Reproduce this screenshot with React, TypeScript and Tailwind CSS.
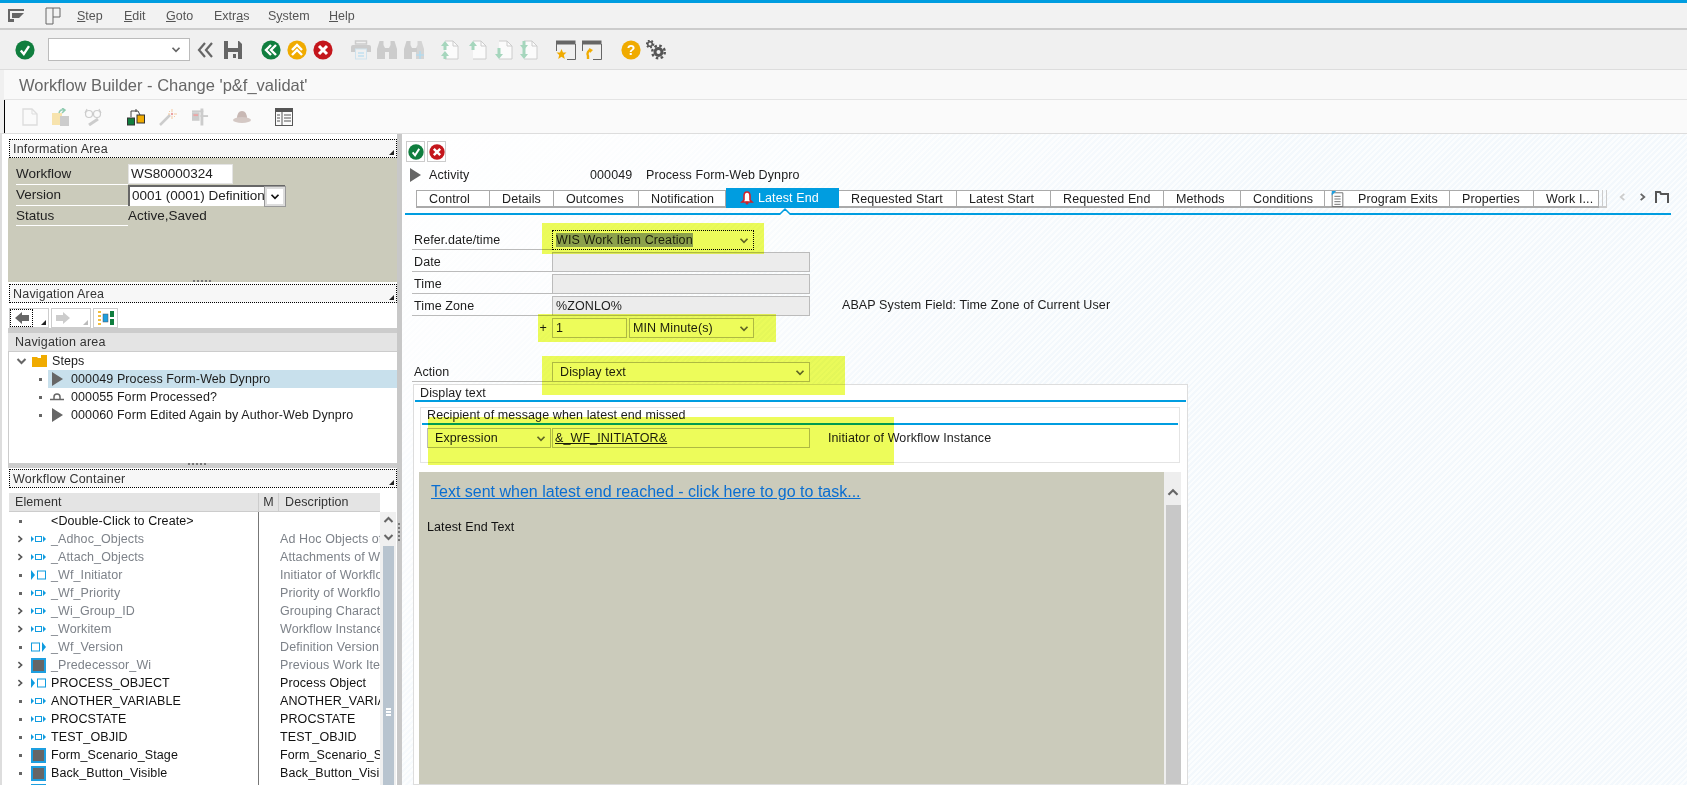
import type { ReactNode } from "react";

const menuItems: { pre: string; key: string; post: string; width: string }[] = [
  { pre: "", key: "S", post: "tep", width: "w-[47px]" },
  { pre: "", key: "E", post: "dit", width: "w-[42px]" },
  { pre: "", key: "G", post: "oto", width: "w-[48px]" },
  { pre: "Extr", key: "a", post: "s", width: "w-[54px]" },
  { pre: "S", key: "y", post: "stem", width: "w-[61px]" },
  { pre: "", key: "H", post: "elp", width: "w-[40px]" },
];

const tabs = [
  { label: "Control", width: "w-[74px]" },
  { label: "Details", width: "w-[64px]" },
  { label: "Outcomes", width: "w-[85px]" },
  { label: "Notification", width: "w-[87px]" },
  { label: "Latest End", width: "w-[113px]", active: true },
  { label: "Requested Start", width: "w-[118px]" },
  { label: "Latest Start", width: "w-[94px]" },
  { label: "Requested End", width: "w-[113px]" },
  { label: "Methods", width: "w-[77px]" },
  { label: "Conditions", width: "w-[84px]" },
  { label: "Program Exits", width: "w-[125px]", doc: true },
  { label: "Properties", width: "w-[84px]" },
  { label: "Work I...", width: "w-[65px]" },
];

type Kind = "none" | "small" | "init" | "version" | "block";

const containerRows: { name: string; desc: string; kind: Kind; open?: boolean; dim?: boolean }[] = [
  { name: "<Double-Click to Create>", desc: "", kind: "none" },
  { name: "_Adhoc_Objects", desc: "Ad Hoc Objects of Workflow", kind: "small", open: true, dim: true },
  { name: "_Attach_Objects", desc: "Attachments of Workflow", kind: "small", open: true, dim: true },
  { name: "_Wf_Initiator", desc: "Initiator of Workflow Instance", kind: "init", dim: true },
  { name: "_Wf_Priority", desc: "Priority of Workflow", kind: "small", dim: true },
  { name: "_Wi_Group_ID", desc: "Grouping Characteristic", kind: "small", open: true, dim: true },
  { name: "_Workitem", desc: "Workflow Instance", kind: "small", open: true, dim: true },
  { name: "_Wf_Version", desc: "Definition Version", kind: "version", dim: true },
  { name: "_Predecessor_Wi", desc: "Previous Work Item", kind: "block", open: true, dim: true },
  { name: "PROCESS_OBJECT", desc: "Process Object", kind: "init", open: true },
  { name: "ANOTHER_VARIABLE", desc: "ANOTHER_VARIABLE", kind: "small" },
  { name: "PROCSTATE", desc: "PROCSTATE", kind: "small" },
  { name: "TEST_OBJID", desc: "TEST_OBJID", kind: "small" },
  { name: "Form_Scenario_Stage", desc: "Form_Scenario_Stage", kind: "block" },
  { name: "Back_Button_Visible", desc: "Back_Button_Visible", kind: "block" },
  { name: "Next_Button_Visible", desc: "Next_Button_Visible", kind: "block" },
];

function Chevron({ dir = "down", className = "w-[10px] h-[7px]", color = "#666" }: { dir?: "down" | "up" | "left" | "right"; className?: string; color?: string }) {
  const d = { down: "M1 2l4 4 4-4", up: "M1 6l4-4 4 4", left: "M7 0.5L3 4l4 3.5", right: "M3 0.5L7 4l-4 3.5" }[dir];
  return (
    <svg viewBox="0 0 10 8" className={className}>
      <path d={d} fill="none" stroke={color} strokeWidth="2" />
    </svg>
  );
}

function Round({ fill, className = "w-[20px] h-[20px]", children }: { fill: string; className?: string; children: ReactNode }) {
  return (
    <svg viewBox="0 0 20 20" className={`shrink-0 ${className}`}>
      <circle cx="10" cy="10" r="9.6" fill={fill} />
      {children}
    </svg>
  );
}

const white = { fill: "none", stroke: "#fff", strokeWidth: 2.4 };

function CheckIcon({ className }: { className?: string }) {
  return (
    <Round fill="#107e3e" className={className}>
      <path d="M5.8 10.5l3 3.6 5.2-8" {...white} />
    </Round>
  );
}

function CancelIcon({ className }: { className?: string }) {
  return (
    <Round fill="#c4161c" className={className}>
      <path d="M6 6l8 8M14 6l-8 8" {...white} strokeWidth={3} />
    </Round>
  );
}

function Floppy() {
  return (
    <svg viewBox="0 0 20 20" className="h-[20px] w-[20px] shrink-0">
      <path d="M1 1h15l3 3v15H1z" fill="#666" />
      <rect x="5" y="1" width="10" height="7" fill="#f0f0f0" />
      <rect x="5" y="12" width="10" height="7" fill="#f0f0f0" />
      <rect x="10" y="14" width="3" height="4" fill="#666" />
    </svg>
  );
}

function Printer() {
  return (
    <svg viewBox="0 0 20 20" className="h-[20px] w-[20px] shrink-0">
      <rect x="4.5" y="1" width="11" height="3" fill="none" stroke="#ccc" strokeWidth="1.5" />
      <path d="M0 7q0-2 2-2h16q2 0 2 2v5H0z" fill="#ccc" />
      <rect x="4.5" y="9" width="11" height="10" fill="#f0f0f0" stroke="#cfe3ee" />
      <path d="M7 13h6M7 16h6" stroke="#a9d8f0" />
    </svg>
  );
}

function Binoculars({ plus = false }: { plus?: boolean }) {
  return (
    <svg viewBox="0 0 20 20" className="h-[20px] w-[20px] shrink-0">
      <path d="M2.500 1h4v4l1.500 3v11H0V9z" fill="#ccc" />
      <path d="M13.500 1h4L20 9v10h-8V8l1.500-3z" fill={plus ? "#d4d4d4" : "#ccc"} />
      <rect x="7" y="8" width="6" height="4" fill="#ccc" />
      {plus && <path d="M16 11v8M12 15h8" stroke="#a9dcf5" strokeWidth="1.200" />}
    </svg>
  );
}

function PageArrows({ up = 0, down = 0 }: { up?: number; down?: number }) {
  const green = "#a6d6bd";
  return (
    <svg viewBox="0 0 18 20" className="h-[20px] w-[18px] shrink-0">
      <path d="M4 1h8l5 5v13H4" fill="#fbfbfb" stroke="#ccc" />
      <path d="M12 1v5h5" fill="none" stroke="#ccc" />
      {up > 0 && <path d="M4 1l4 5H5.500v4h-3V6H0z" fill={green} />}
      {up > 1 && <path d="M4 11l4 5H5.500v3h-3v-3H0z" fill={green} />}
      {down > 0 && up === 0 && <path d="M4 19l4-5H5.500V8h-3v6H0z" fill={green} />}
      {down > 1 && <path d="M4 10l4-5H5.500V1h-3v4H0z" fill={green} />}
    </svg>
  );
}

function WindowIcon({ children }: { children: ReactNode }) {
  return (
    <svg viewBox="0 0 20 20" className="h-[20px] w-[20px] shrink-0">
      <rect x="0" y="0.500" width="19.500" height="4" fill="#666" />
      <path d="M0.500 4v7M19.500 4v15.500H11" fill="none" stroke="#666" />
      {children}
    </svg>
  );
}

function Gears() {
  return (
    <svg viewBox="0 0 20 20" className="h-[20px] w-[20px] shrink-0" fill="none" stroke="#555">
      <circle cx="4" cy="4" r="2.300" strokeWidth="1.600" />
      <circle cx="4" cy="4" r="3.600" strokeWidth="1.500" strokeDasharray="1.800 1.800" />
      <circle cx="12.500" cy="12" r="3.500" strokeWidth="3" />
      <circle cx="12.500" cy="12" r="6.300" strokeWidth="2.400" strokeDasharray="2.500 2.450" />
    </svg>
  );
}

function AppTools() {
  return (
    <div className="ml-[17px] flex items-center">
      <svg viewBox="0 0 16 18" className="h-[18px] w-[16px]">
        <path d="M1 1h9l5 5v11H1z" fill="#fafafa" stroke="#ddd" strokeWidth="1.400" />
        <path d="M10 1v5h5" fill="none" stroke="#ddd" />
      </svg>
      <svg viewBox="0 0 18 18" className="ml-[14px] h-[18px] w-[18px]">
        <rect x="0" y="5" width="10" height="12" fill="#f7e3ad" />
        <rect x="8" y="8" width="9" height="10" fill="#ccc" />
        <path d="M7 5q1-4 5-3M10 0l3 2-3 3" fill="none" stroke="#8fcbb0" strokeWidth="1.500" />
      </svg>
      <svg viewBox="0 0 20 18" className="ml-[14px] h-[18px] w-[20px]" fill="none" stroke="#ccc" strokeWidth="1.200">
        <circle cx="5" cy="6" r="3.500" />
        <circle cx="13" cy="6" r="3.500" />
        <path d="M8.500 6h1M1 5L3 1M17 5l-2-4" />
        <path d="M5 17l9-6" stroke="#ccc" strokeWidth="3" />
      </svg>
      <svg viewBox="0 0 18 18" className="ml-[23px] h-[18px] w-[18px]">
        <path d="M4 9V3h7l2 4" fill="none" stroke="#444" />
        <path d="M9 1v3" stroke="#444" />
        <rect x="0.500" y="10" width="7" height="7" fill="#107e3e" stroke="#333" />
        <rect x="10" y="7" width="7.500" height="8" fill="#f0ab00" stroke="#333" />
      </svg>
      <svg viewBox="0 0 18 18" className="ml-[14px] h-[18px] w-[18px]">
        <path d="M1 17L11 7" stroke="#ccc" strokeWidth="2.500" />
        <path d="M13 1v3M13 8v3M9 6h2M15 6h3M10 3l1 1M16 9l-1-1" stroke="#f3c9a0" />
        <circle cx="13" cy="6" r="1.200" fill="#eba0a0" />
      </svg>
      <svg viewBox="0 0 18 18" className="ml-[15px] h-[18px] w-[17px]">
        <rect x="0" y="2" width="12" height="2" fill="#ccc" />
        <rect x="0" y="4" width="8" height="9" fill="#ccc" />
        <rect x="1.500" y="6" width="5" height="2" fill="#eba5a5" />
        <rect x="9" y="0" width="3" height="18" fill="#ccc" />
        <rect x="9" y="7" width="8" height="2" fill="#ccc" />
      </svg>
      <svg viewBox="0 0 18 14" className="ml-[24px] h-[14px] w-[18px]">
        <path d="M4 9Q4 1 9 1t5 8z" fill="#c8b8b4" />
        <ellipse cx="9" cy="10" rx="9" ry="3" fill="#d4c8c4" />
      </svg>
      <svg viewBox="0 0 18 18" className="ml-[24px] h-[18px] w-[18px]">
        <rect x="0.500" y="0.500" width="17" height="17" fill="#fafafa" stroke="#555" />
        <rect x="0" y="0" width="18" height="4" fill="#555" />
        <path d="M7 4v14" stroke="#555" />
        <path d="M2 7h3M2 10h3M2 13h3M9 7h7M9 10h7M9 13h7" stroke="#555" />
      </svg>
    </div>
  );
}

function PanelHeader({ label }: { label: string }) {
  return (
    <div className="relative ml-[1px] flex h-[19px] shrink-0 items-center border border-dotted border-black bg-[#f7f7f7] pt-[1px] pl-[3px] text-[12.5px] tracking-[0.2px] text-[#333]">
      {label}
      <svg viewBox="0 0 5 5" className="absolute right-[2px] bottom-[2px] h-[5px] w-[5px]">
        <path d="M5 0v5H0z" fill="#222" />
      </svg>
    </div>
  );
}

function SashDots({ className = "" }: { className?: string }) {
  return (
    <div className={`flex gap-[2px] ${className}`}>
      {[0, 1, 2, 3, 4].map((i) => (
        <span key={i} className="h-[2px] w-[2px] bg-[#777]" />
      ))}
    </div>
  );
}

function StepTriangle() {
  return (
    <svg viewBox="0 0 11 14" className="h-[14px] w-[11px] shrink-0">
      <path d="M0 0l11 7-11 7z" fill="#666" />
    </svg>
  );
}

function KindIcon({ kind }: { kind: Kind }) {
  if (kind === "none") return <span className="h-[14px] w-[15px] shrink-0" />;
  if (kind === "block") {
    return (
      <svg viewBox="0 0 15 15" className="h-[15px] w-[15px] shrink-0">
        <rect x="0" y="0" width="15" height="15" fill="#1d9fe0" />
        <rect x="2" y="2" width="11" height="11" fill="#666" />
      </svg>
    );
  }
  return (
    <svg viewBox="0 0 15 12" className="h-[12px] w-[15px] shrink-0" fill="#0f9ce0">
      {kind === "small" && (
        <>
          <path d="M0 3l3 3-3 3z" />
          <rect x="4.500" y="3.500" width="6" height="5" fill="none" stroke="#0f9ce0" />
          <path d="M12 3l3 3-3 3z" />
        </>
      )}
      {kind === "init" && (
        <>
          <path d="M0 1l4 5-4 5z" />
          <rect x="6.500" y="2" width="8" height="8" fill="none" stroke="#0f9ce0" />
        </>
      )}
      {kind === "version" && (
        <>
          <rect x="0.500" y="2" width="8" height="8" fill="none" stroke="#0f9ce0" />
          <path d="M11 1l4 5-4 5z" />
        </>
      )}
    </svg>
  );
}

function Bullet() {
  return <span className="block h-[3px] w-[3px] bg-[#666]" />;
}

function LeftColumn() {
  return (
    <aside className="flex h-full w-[397px] shrink-0 flex-col overflow-hidden border-l-2 border-[#ddd] bg-white pt-[5px] pl-[6px]">
      <PanelHeader label="Information Area" />
      <div className="flex h-[124px] shrink-0 flex-col bg-[#cbcbbb] pt-[6px] pl-[8px] text-[13.5px] text-[#222]">
        <div className="flex h-[21px]">
          <span className="flex h-[21px] w-[112px] items-center border-b border-white pt-[1px]">Workflow</span>
          <span className="flex h-[20px] w-[105px] items-center border border-[#e4e4e4] bg-white pt-[1px] pl-[2px]">WS80000324</span>
        </div>
        <div className="flex h-[21px]">
          <span className="flex h-[21px] w-[112px] items-center border-b border-white">Version</span>
          <div className="flex h-[21px] w-[157px] items-center justify-between border-t-2 border-l-2 border-[#666] bg-white pl-[2px]">
            0001 (0001) Definition
            <span className="flex h-[19px] w-[20px] items-center justify-center border-2 border-[#ddd] bg-white outline outline-[#999]">
              <Chevron color="#111" />
            </span>
          </div>
        </div>
        <div className="flex h-[20px]">
          <span className="flex h-[20px] w-[112px] items-center border-b border-white pt-[1px]">Status</span>
          <span className="flex items-center pt-[1px]">Active,Saved</span>
        </div>
        <SashDots className="mt-auto ml-[177px]" />
      </div>
      <div className="h-[2px] shrink-0" />
      <PanelHeader label="Navigation Area" />
      <div className="flex h-[25px] shrink-0 items-end gap-[2px] bg-white pl-[1px]">
        <div className="relative flex h-[20px] w-[40px] items-center border border-[#ccc]">
          <span className="flex h-[18px] w-[23px] items-center justify-center border border-dotted border-black">
            <svg viewBox="0 0 14 12" className="h-[12px] w-[14px]">
              <path d="M0 6l7-6v3h7v6H7v3z" fill="#666" />
            </svg>
          </span>
          <svg viewBox="0 0 5 5" className="absolute right-[2px] bottom-[2px] h-[5px] w-[5px]">
            <path d="M5 0v5H0z" fill="#222" />
          </svg>
        </div>
        <div className="relative flex h-[20px] w-[40px] items-center border border-[#ccc] pl-[4px]">
          <svg viewBox="0 0 14 12" className="h-[12px] w-[14px]">
            <path d="M14 6L7 0v3H0v6h7v3z" fill="#ccc" />
          </svg>
          <svg viewBox="0 0 5 5" className="absolute right-[2px] bottom-[2px] h-[5px] w-[5px]">
            <path d="M5 0v5H0z" fill="#bbb" />
          </svg>
        </div>
        <div className="flex h-[20px] w-[25px] items-center justify-center border border-[#ccc]">
          <svg viewBox="0 0 16 14" className="h-[14px] w-[16px]">
            <path d="M0 1h3M0 5h3M0 9h3M0 13h3" stroke="#f0ab00" strokeWidth="1.500" />
            <rect x="5" y="3" width="5" height="8" fill="#1d9fe0" stroke="#555" strokeWidth="0.500" />
            <rect x="12" y="0" width="4" height="6" fill="#107e3e" />
            <rect x="12" y="8" width="4" height="6" fill="#107e3e" />
          </svg>
        </div>
      </div>
      <div className="h-[5px] shrink-0 bg-[#ccc]" />
      <div className="flex h-[19px] shrink-0 items-center border-b border-[#ccc] bg-[#e4e4e4] pl-[7px] text-[12.5px] tracking-[0.2px] text-[#333]">
        Navigation area
      </div>
      <div className="flex h-[111px] shrink-0 flex-col border-l border-[#ccc] text-[12.5px] tracking-[0.1px] text-[#1c1c1c]">
        <div className="flex h-[18px] items-center pl-[7px]">
          <Chevron className="h-[8px] w-[11px]" />
          <svg viewBox="0 0 15 12" className="ml-[5px] h-[12px] w-[15px]">
            <path d="M0 2h5l1 1h3V0h6v12H0z" fill="#f0ab00" />
          </svg>
          <span className="ml-[5px]">Steps</span>
        </div>
        <div className="flex h-[18px] items-center pl-[30px]">
          <Bullet />
          <div className="ml-[6px] flex h-full flex-1 items-center bg-[#c8e0ec] pl-[4px]">
            <StepTriangle />
            <span className="ml-[8px]">000049 Process Form-Web Dynpro</span>
          </div>
        </div>
        <div className="flex h-[18px] items-center pl-[30px]">
          <Bullet />
          <div className="ml-[6px] flex h-full flex-1 items-center pl-[2px]">
            <svg viewBox="0 0 14 8" className="h-[8px] w-[14px] shrink-0">
              <path d="M4 6V4q0-3 3-3t3 3v2" fill="none" stroke="#666" strokeWidth="1.500" />
              <path d="M0 6.500h14" stroke="#666" strokeWidth="1.500" />
            </svg>
            <span className="ml-[7px]">000055 Form Processed?</span>
          </div>
        </div>
        <div className="flex h-[18px] items-center pl-[30px]">
          <Bullet />
          <div className="ml-[6px] flex h-full flex-1 items-center pl-[4px]">
            <StepTriangle />
            <span className="ml-[8px]">000060 Form Edited Again by Author-Web Dynpro</span>
          </div>
        </div>
      </div>
      <div className="flex h-[5px] shrink-0 justify-center bg-[#ccc] pr-[12px]">
        <SashDots />
      </div>
      <div className="h-px shrink-0" />
      <PanelHeader label="Workflow Container" />
      <div className="h-[5px] shrink-0" />
      <ContainerTable />
    </aside>
  );
}

function ContainerTable() {
  return (
    <div className="flex min-h-0 flex-1 overflow-hidden pl-[1px] text-[12.5px] tracking-[0.1px]">
      <div className="w-[371px] shrink-0">
        <div className="flex h-[19px] items-center border-b border-[#ccc] bg-[#e4e4e4] text-[#333]">
          <span className="flex h-full w-[250px] items-center border-r border-[#ccc] pl-[6px]">Element</span>
          <span className="flex h-full w-[20px] items-center justify-center border-r border-[#ccc]">M</span>
          <span className="pl-[6px]">Description</span>
        </div>
        {containerRows.map((row) => (
          <div key={row.name} className={`flex h-[18px] items-center ${row.dim ? "text-[#7d8289]" : "text-[#111]"}`}>
            <div className="flex h-full w-[250px] shrink-0 items-center border-r border-[#777] pl-[7px]">
              <span className="flex w-[8px] items-center justify-center">
                {row.open ? <Chevron dir="right" className="h-[10px] w-[9px]" color="#555" /> : <Bullet />}
              </span>
              <span className="ml-[7px] flex w-[15px] items-center">
                <KindIcon kind={row.kind} />
              </span>
              <span className="ml-[5px] whitespace-nowrap">{row.name}</span>
            </div>
            <div className="w-[121px] overflow-hidden pl-[21px] whitespace-nowrap">{row.desc}</div>
          </div>
        ))}
      </div>
      <div className="flex w-[16px] shrink-0 flex-col pt-[19px]">
        <div className="flex h-full flex-col items-center bg-[#f0f0f0]">
          <Chevron dir="up" className="mt-[4px] h-[8px] w-[11px]" />
          <Chevron className="mt-[9px] h-[8px] w-[11px]" />
          <div className="mt-[5px] flex w-[11px] flex-1 flex-col items-center gap-[1px] bg-[#b8c4cf] pt-[162px]">
            <span className="h-[2px] w-[5px] bg-white" />
            <span className="h-[2px] w-[5px] bg-white" />
            <span className="h-[2px] w-[5px] bg-white" />
          </div>
        </div>
      </div>
    </div>
  );
}

function SelectBox({ width, label, dotted = false }: { width: string; label: ReactNode; dotted?: boolean }) {
  return (
    <div className={`flex h-[20px] shrink-0 items-center justify-between bg-white pr-[4px] pl-[3px] ${width} ${dotted ? "border border-dotted border-black" : "border border-[#bbb]"}`}>
      <span className="whitespace-nowrap">{label}</span>
      <Chevron />
    </div>
  );
}

function FieldRow({ label, children }: { label: string; children: ReactNode }) {
  return (
    <div className="ml-[10px] flex h-[22px] items-end">
      <span className="flex h-[20px] w-[140px] shrink-0 items-center border-b border-[#bbb] pt-[1px] pl-[2px]">{label}</span>
      {children}
    </div>
  );
}

function ReadOnly({ text }: { text?: string }) {
  return <div className="flex h-[20px] w-[258px] shrink-0 items-center border border-[#bbb] bg-[#ececec] pl-[3px]">{text}</div>;
}

function DetailPane() {
  return (
    <section className="flex h-full min-w-0 flex-1 flex-col bg-[linear-gradient(135deg,#ffffff_0%,#ffffff00_45%),repeating-linear-gradient(135deg,#fbfdfe_0px,#fbfdfe_2px,#f3f8fc_2px,#f3f8fc_4px)] pt-[7px] text-[12.5px] tracking-[0.1px] text-[#1c1c1c]">
      <div className="ml-[4px] flex gap-[2px]">
        <span className="flex h-[21px] w-[19px] items-center justify-center border border-[#ccc]">
          <CheckIcon className="h-[16px] w-[16px]" />
        </span>
        <span className="flex h-[21px] w-[19px] items-center justify-center border border-[#ccc]">
          <CancelIcon className="h-[16px] w-[16px]" />
        </span>
      </div>
      <div className="mt-[4px] flex h-[18px] items-center pl-[8px]">
        <StepTriangle />
        <span className="ml-[8px] w-[161px]">Activity</span>
        <span className="w-[56px]">000049</span>
        <span>Process Form-Web Dynpro</span>
      </div>
      <div className="mt-[4px] flex h-[20px] items-end pl-[14px]">
        {tabs.map((tab, i) =>
          tab.active ? (
            <div key={tab.label} className={`relative flex h-[20px] items-center bg-[#009de0] pl-[14px] text-white ${tab.width}`}>
              <svg viewBox="0 0 14 14" className="mr-[4px] h-[14px] w-[14px]">
                <path d="M7 1q3 0 3 4v4l2 2H2l2-2V5q0-4 3-4z" fill="#fff" stroke="#d0232b" strokeWidth="1.600" />
                <circle cx="7" cy="12" r="1.500" fill="#d0232b" />
              </svg>
              {tab.label}
              <svg viewBox="0 0 14 8" className="absolute -bottom-[7px] left-[52px] h-[8px] w-[14px]">
                <path d="M0 8h1l6-6 6 6h1" fill="#fff" stroke="#009de0" strokeWidth="1.500" />
              </svg>
            </div>
          ) : (
            <div key={tab.label} className={`flex h-[18px] items-center border-t border-r border-b-2 border-[#aaa] bg-white pt-[1px] ${tab.doc ? "pl-[6px]" : "pl-[12px]"} ${i === 0 ? "border-l" : ""} ${tab.width}`}>
              {tab.doc && (
                <svg viewBox="0 0 13 18" className="mr-[14px] h-[16px] w-[13px] shrink-0">
                  <path d="M0.500 2h12v15.500H0.500z" fill="#fff" stroke="#666" />
                  <path d="M0 0h5L0 5z" fill="#1d9fe0" />
                  <path d="M3 6h7M3 9h7M3 12h7M3 15h7" stroke="#666" />
                </svg>
              )}
              <span className="whitespace-nowrap">{tab.label}</span>
            </div>
          ),
        )}
        <div className="h-[18px] w-[8px] border-r border-b-2 border-[#ccc]">
          <div className="ml-[3px] h-full w-[3px] border-l border-[#ccc]" />
        </div>
        <div className="mb-[2px] ml-[11px] flex items-center self-center">
          <Chevron dir="left" className="h-[10px] w-[9px]" color="#ccc" />
          <Chevron dir="right" className="ml-[11px] h-[10px] w-[9px]" />
          <svg viewBox="0 0 14 14" className="ml-[8px] h-[14px] w-[14px]">
            <path d="M1 13V2h4l1 2h7v9" fill="none" stroke="#555" strokeWidth="2" />
          </svg>
        </div>
      </div>
      <div className="mt-[5px] ml-[3px] h-[2px] w-[1266px] shrink-0 bg-[#009de0]" />
      <div className="mt-[13px]">
        <FieldRow label="Refer.date/time">
          <SelectBox
            width="w-[202px]"
            dotted
            label={<span className="bg-[#97a3d8]">WIS Work Item Creation</span>}
          />
        </FieldRow>
        <FieldRow label="Date">
          <ReadOnly />
        </FieldRow>
        <FieldRow label="Time">
          <ReadOnly />
        </FieldRow>
        <FieldRow label="Time Zone">
          <ReadOnly text="%ZONLO%" />
          <span className="mb-[1px] ml-[32px] flex h-[20px] items-center pt-[1px]">ABAP System Field: Time Zone of Current User</span>
        </FieldRow>
        <div className="ml-[10px] flex h-[22px] items-end">
          <span className="flex h-[20px] w-[140px] items-center justify-end pr-[5px]">+</span>
          <div className="flex h-[20px] w-[75px] items-center border border-[#bbb] bg-white pl-[3px]">1</div>
          <div className="ml-[2px]">
            <SelectBox width="w-[125px]" label="MIN Minute(s)" />
          </div>
        </div>
      </div>
      <div className="mt-[22px]">
        <FieldRow label="Action">
          <SelectBox width="w-[258px]" label={<span className="pl-[4px]">Display text</span>} />
        </FieldRow>
      </div>
      <div className="mt-[2px] ml-[11px] flex min-h-0 w-[775px] flex-1 flex-col border border-[#ddd] bg-white">
        <div className="flex h-[15px] items-center pt-[1px] pl-[6px]">Display text</div>
        <div className="mx-[1px] h-[2px] shrink-0 bg-[#009de0]" />
        <div className="mt-[5px] ml-[6px] h-[56px] w-[760px] shrink-0 border border-[#e4e4e4]">
          <div className="flex h-[15px] items-center pl-[6px]">Recipient of message when latest end missed</div>
          <div className="mx-px h-[2px] bg-[#009de0]" />
          <div className="mt-[3px] flex items-center pl-[6px]">
            <SelectBox width="w-[124px]" label={<span className="pl-[4px]">Expression</span>} />
            <div className="ml-px flex h-[20px] w-[258px] items-center border border-[#bbb] bg-white pl-[2px] underline">&amp;_WF_INITIATOR&amp;</div>
            <span className="ml-[18px]">Initiator of Workflow Instance</span>
          </div>
        </div>
        <div className="mt-[9px] ml-[5px] flex min-h-0 flex-1">
          <div className="w-[745px] bg-[#cbcbbb]">
            <a className="block pt-[11px] pl-[12px] text-[16px] leading-[18px] tracking-normal text-[#0a6ed1] underline">
              Text sent when latest end reached - click here to go to task...
            </a>
            <p className="mt-[17px] pl-[8px] leading-[18px] text-[#111]">Latest End Text</p>
          </div>
          <div className="flex w-[17px] flex-col items-center bg-[#eee] pl-px">
            <Chevron dir="up" className="mt-[16px] h-[9px] w-[12px]" />
            <div className="mt-[8px] w-[15px] flex-1 bg-[#c8c8c8]" />
          </div>
        </div>
      </div>
    </section>
  );
}

export default function App() {
  return (
    <div className="relative flex h-[785px] w-full flex-col overflow-hidden bg-white font-['Liberation_Sans',Arial,sans-serif] text-[12.5px] text-[#222]">
      <div className="h-[3px] shrink-0 bg-[#009de0]" />
      <div className="flex h-[27px] shrink-0 items-center border-b-2 border-[#ccc] bg-[#f2f2f2] text-[#555]">
        <svg viewBox="0 0 16 13" className="ml-[8px] h-[13px] w-[16px]">
          <path d="M0 0h16v2H0zM0 2h2v11H0zM2 10h4v3H2zM4 4h12l-5 5H4z" fill="#666" />
        </svg>
        <svg viewBox="0 0 16 18" className="ml-[21px] h-[18px] w-[16px]" fill="none" stroke="#666">
          <path d="M1 1h14v9H8v7H1z" />
          <path d="M8 1v9" />
        </svg>
        <div className="ml-[16px] flex pt-[1px]">
          {menuItems.map((m) => (
            <span key={m.post + m.key} className={m.width}>
              {m.pre}
              <span className="underline">{m.key}</span>
              {m.post}
            </span>
          ))}
        </div>
      </div>
      <div className="flex h-[40px] shrink-0 items-center border-b border-[#ddd] bg-[#f0f0f0] pl-[15px]">
        <CheckIcon />
        <div className="ml-[13px] flex h-[23px] w-[142px] items-center justify-end border border-[#bbb] bg-white pr-[8px]">
          <Chevron />
        </div>
        <svg viewBox="0 0 16 16" className="ml-[7px] h-[16px] w-[16px]" fill="none" stroke="#666" strokeWidth="2.200">
          <path d="M8 1L2 8l6 7M15 1L9 8l6 7" />
        </svg>
        <span className="ml-[10px]">
          <Floppy />
        </span>
        <span className="ml-[18px]">
          <Round fill="#107e3e">
            <path d="M10 5l-5 5 5 5M15 5l-5 5 5 5" {...white} />
          </Round>
        </span>
        <span className="ml-[6px]">
          <Round fill="#f0ab00">
            <path d="M5 10l5-5 5 5M5 15l5-5 5 5" {...white} />
          </Round>
        </span>
        <span className="ml-[6px]">
          <CancelIcon />
        </span>
        <span className="ml-[18px]">
          <Printer />
        </span>
        <span className="ml-[6px]">
          <Binoculars />
        </span>
        <span className="ml-[7px]">
          <Binoculars plus />
        </span>
        <span className="ml-[17px]">
          <PageArrows up={2} />
        </span>
        <span className="ml-[10px]">
          <PageArrows up={1} />
        </span>
        <span className="ml-[8px]">
          <PageArrows down={1} />
        </span>
        <span className="ml-[7px]">
          <PageArrows down={2} />
        </span>
        <span className="ml-[18px]">
          <WindowIcon>
            <path d="M5.500 9l1.500 3.500h3.500l-2.700 2.500 1 4-3.300-2.300-3.300 2.300 1-4L0.500 12.500H4z" fill="#f0ab00" />
          </WindowIcon>
        </span>
        <span className="ml-[6px]">
          <WindowIcon>
            <path d="M9 10a4 4 0 0 0-3 6v3" fill="none" stroke="#f0ab00" strokeWidth="2.400" />
            <path d="M7 8l4 2-3 3z" fill="#f0ab00" />
          </WindowIcon>
        </span>
        <span className="ml-[19px]">
          <svg viewBox="0 0 20 20" className="h-[20px] w-[20px]">
            <circle cx="10" cy="10" r="9.600" fill="#f0ab00" />
            <text x="10" y="15" textAnchor="middle" fontSize="14" fontWeight="700" fill="#fff">?</text>
          </svg>
        </span>
        <span className="ml-[5px]">
          <Gears />
        </span>
      </div>
      <div className="flex h-[30px] shrink-0 bg-[#f0f0f0] pl-[4px]">
        <div className="flex flex-1 items-center border-b border-[#e4e4e4] bg-[#f9f9f9] pt-[2px] pl-[15px] text-[16.5px] text-[#666]">
          Workflow Builder - Change 'p&amp;f_validat'
        </div>
      </div>
      <div className="flex h-[34px] shrink-0 border-b border-[#ddd] bg-[#f0f0f0] pl-[4px]">
        <div className="flex flex-1 items-center border-l border-black bg-[#fafafa]">
          <AppTools />
        </div>
      </div>
      <main className="flex min-h-0 flex-1">
        <LeftColumn />
        <div className="flex w-[5px] shrink-0 flex-col items-center bg-[#c8c8c8] pt-[389px] pr-[1px]">
          <div className="flex flex-col gap-[2px]">
            {[0, 1, 2, 3, 4].map((i) => (
              <span key={i} className="h-[2px] w-[2px] bg-[#777]" />
            ))}
          </div>
        </div>
        <DetailPane />
      </main>
      <div className="absolute top-[223px] left-[542px] h-[31px] w-[222px] bg-[#edfc5a] mix-blend-multiply" />
      <div className="absolute top-[314px] left-[538px] h-[28px] w-[238px] bg-[#edfc5a] mix-blend-multiply" />
      <div className="absolute top-[356px] left-[542px] h-[39px] w-[303px] bg-[#edfc5a] mix-blend-multiply" />
      <div className="absolute top-[417px] left-[428px] h-[48px] w-[466px] bg-[#edfc5a] mix-blend-multiply" />
    </div>
  );
}
